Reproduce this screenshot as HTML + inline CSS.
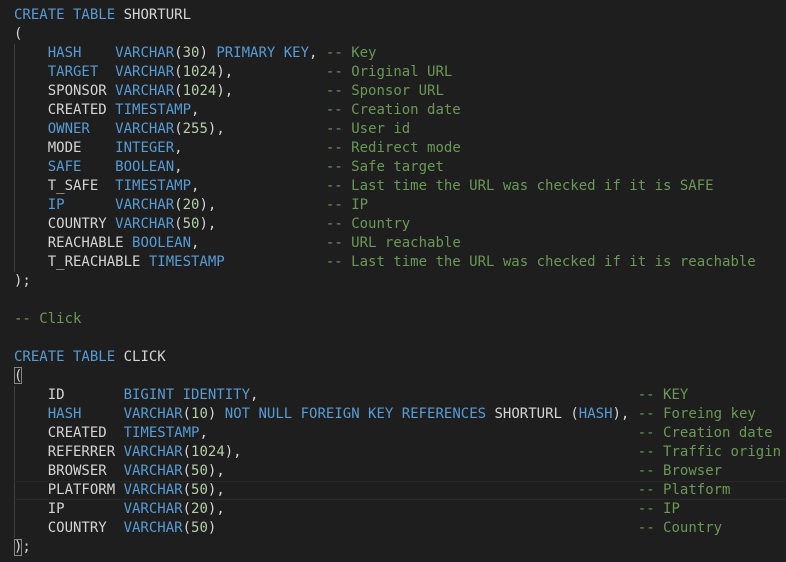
<!DOCTYPE html>
<html><head><meta charset="utf-8"><style>
html,body{margin:0;padding:0;background:#1e1e1e;width:786px;height:562px;overflow:hidden}
pre{position:absolute;left:14px;top:6px;margin:0;font-family:"DejaVu Sans Mono","Liberation Mono",monospace;font-size:14px;line-height:19px;color:#d4d4d4;white-space:pre}
.k{color:#569cd6}.n{color:#b5cea8}.c{color:#6a9955}
.g{position:absolute;left:14px;width:1px;background:#404040}
.cur{position:absolute;left:14px;right:0;top:481px;height:17px;border-top:1px solid #282828;border-bottom:1px solid #282828}
.b{position:absolute;width:8px;height:17px;border:1px solid #888;box-sizing:border-box}
</style></head><body>
<div class="g" style="top:44px;height:228px"></div>
<div class="g" style="top:386px;height:152px"></div>
<div class="cur"></div>
<div class="b" style="left:14px;top:367px"></div>
<div class="b" style="left:14px;top:539px"></div>
<pre><span class="k">CREATE TABLE</span> SHORTURL
(
    <span class="k">HASH</span>    <span class="k">VARCHAR</span>(<span class="n">30</span>) <span class="k">PRIMARY KEY</span>, <span class="c">-- Key</span>
    <span class="k">TARGET</span>  <span class="k">VARCHAR</span>(<span class="n">1024</span>),           <span class="c">-- Original URL</span>
    SPONSOR <span class="k">VARCHAR</span>(<span class="n">1024</span>),           <span class="c">-- Sponsor URL</span>
    CREATED <span class="k">TIMESTAMP</span>,               <span class="c">-- Creation date</span>
    <span class="k">OWNER</span>   <span class="k">VARCHAR</span>(<span class="n">255</span>),            <span class="c">-- User id</span>
    MODE    <span class="k">INTEGER</span>,                 <span class="c">-- Redirect mode</span>
    <span class="k">SAFE</span>    <span class="k">BOOLEAN</span>,                 <span class="c">-- Safe target</span>
    T_SAFE  <span class="k">TIMESTAMP</span>,               <span class="c">-- Last time the URL was checked if it is SAFE</span>
    <span class="k">IP</span>      <span class="k">VARCHAR</span>(<span class="n">20</span>),             <span class="c">-- IP</span>
    COUNTRY <span class="k">VARCHAR</span>(<span class="n">50</span>),             <span class="c">-- Country</span>
    REACHABLE <span class="k">BOOLEAN</span>,               <span class="c">-- URL reachable</span>
    T_REACHABLE <span class="k">TIMESTAMP</span>            <span class="c">-- Last time the URL was checked if it is reachable</span>
);

<span class="c">-- Click</span>

<span class="k">CREATE TABLE</span> CLICK
(
    ID       <span class="k">BIGINT IDENTITY</span>,                                             <span class="c">-- KEY</span>
    <span class="k">HASH</span>     <span class="k">VARCHAR</span>(<span class="n">10</span>) <span class="k">NOT NULL FOREIGN KEY REFERENCES</span> SHORTURL (<span class="k">HASH</span>), <span class="c">-- Foreing key</span>
    CREATED  <span class="k">TIMESTAMP</span>,                                                   <span class="c">-- Creation date</span>
    REFERRER <span class="k">VARCHAR</span>(<span class="n">1024</span>),                                               <span class="c">-- Traffic origin</span>
    BROWSER  <span class="k">VARCHAR</span>(<span class="n">50</span>),                                                 <span class="c">-- Browser</span>
    PLATFORM <span class="k">VARCHAR</span>(<span class="n">50</span>),                                                 <span class="c">-- Platform</span>
    IP       <span class="k">VARCHAR</span>(<span class="n">20</span>),                                                 <span class="c">-- IP</span>
    COUNTRY  <span class="k">VARCHAR</span>(<span class="n">50</span>)                                                  <span class="c">-- Country</span>
);</pre>
</body></html>
